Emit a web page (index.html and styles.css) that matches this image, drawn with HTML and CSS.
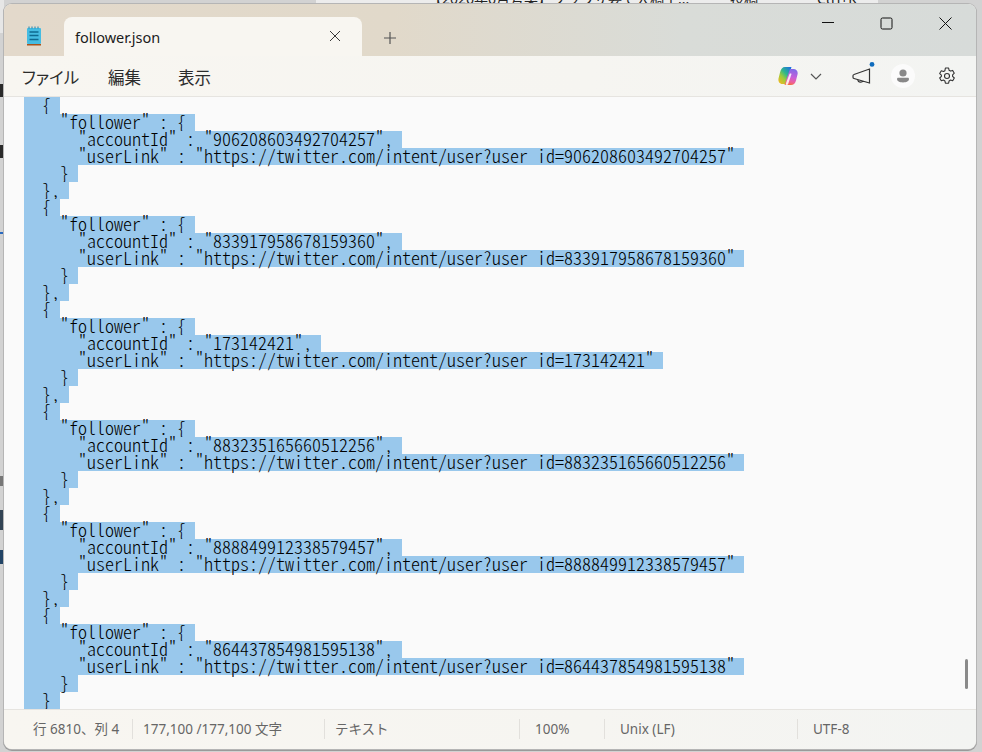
FILE: index.html
```html
<!DOCTYPE html>
<html lang="ja">
<head>
<meta charset="utf-8">
<title>follower.json</title>
<link rel="stylesheet" href="styles.css">
</head>
<body>
<div class="behind">
  <div class="behind-top"><span class="behind-title">【2026年6月号案】ブラウザ要で入稿工...</span><span class="behind-post">投稿</span><span class="behind-key">Ctrl+K</span></div>
  <i class="mark m0"></i><i class="mark m1"></i><i class="mark m2"></i><i class="mark m3"></i><i class="mark m4"></i><i class="mark m5"></i><i class="mark m6"></i>
</div>
<main class="window">
  <header class="tabbar">
    <div class="app-icon">
      <svg width="16" height="20" viewBox="0 0 16 20"><rect x="1" y="2" width="14" height="16" rx="1" fill="#45bce2"/><path d="M3 .5v2M6 .5v2M9 .5v2M12 .5v2" stroke="#1a7fa8" stroke-width="1"/><path d="M3.500 6h9M3.500 9.500h9M3.500 13.500h9" stroke="#0e6a90" stroke-width="1.500"/><rect x="1" y="18" width="14" height="1.500" fill="#a8531c"/></svg>
    </div>
    <div class="tab">
      <span class="tab-name">follower.json</span>
      <svg class="tab-close" width="12" height="12" viewBox="0 0 12 12"><path d="M1 1l10 10M11 1L1 11" stroke="#3a3a3a" stroke-width="1"/></svg>
    </div>
    <svg class="tab-new" width="12" height="12" viewBox="0 0 12 12"><path d="M6 0v12M0 6h12" stroke="#555" stroke-width="1.200"/></svg>
    <div class="caption">
      <svg width="13" height="13" viewBox="0 0 13 13"><path d="M1 5.500h12" stroke="#111" stroke-width="1"/></svg>
      <svg width="13" height="13" viewBox="0 0 13 13"><rect x="1" y="1" width="11" height="11" rx="1.500" fill="none" stroke="#111" stroke-width="1"/></svg>
      <svg width="13" height="13" viewBox="0 0 13 13"><path d="M.5.500l12 12M12.500.500l-12 12" stroke="#111" stroke-width="1"/></svg>
    </div>
  </header>
  <nav class="menubar">
    <span class="menu-item m-file">ファイル</span>
    <span class="menu-item m-edit">編集</span>
    <span class="menu-item">表示</span>
    <div class="tools">
      <svg class="copilot" width="20" height="20" viewBox="0 0 20 20">
        <defs>
          <linearGradient id="cpA" x1="0.1" y1="1" x2="0.9" y2="0"><stop offset="0" stop-color="#f5b81f"/><stop offset=".35" stop-color="#9ccb3c"/><stop offset=".6" stop-color="#2fb88a"/><stop offset="1" stop-color="#1b6fe4"/></linearGradient>
          <linearGradient id="cpB" x1="0.6" y1="0" x2="0.4" y2="1"><stop offset="0" stop-color="#7f6be8"/><stop offset=".5" stop-color="#c85fd8"/><stop offset=".8" stop-color="#ee5f9c"/><stop offset="1" stop-color="#f2703c"/></linearGradient>
        </defs>
        <path d="M7 1h6.500L8 18H4.500C1.500 18 0 15.500.5 12.500L2 6.500C2.800 3 4.500 1 7 1z" fill="url(#cpA)"/>
        <path d="M13 19H6.500L12 3h3.500c3 0 4.800 2.500 4 5.500L18 14.500c-.8 3-2.500 4.500-5 4.500z" fill="url(#cpB)"/>
        <path d="M7.500 18.500l4-10.500c.3-.6 1.800-.6 2 0l-3.500 10.500c-.3.500-2.200.500-2.500 0z" fill="#fff" opacity=".85"/>
      </svg>
      <svg class="chev" width="12" height="7" viewBox="0 0 12 7"><path d="M1 1l5 5 5-5" fill="none" stroke="#555" stroke-width="1.200"/></svg>
      <svg class="horn" width="23" height="28" viewBox="0 0 23 28"><path d="M17.500 7v14L2 16.500c-.7-.2-1-.6-1-1.200v-1.600c0-.6.300-1 1-1.200zM5.500 17.500c.5 3 4.500 3.500 5.500 1.300" fill="none" stroke="#333" stroke-width="1.200"/><circle cx="20" cy="2.400" r="2.400" fill="#0f6cbd"/></svg>
      <div class="avatar"><svg width="12" height="14" viewBox="0 0 14 16"><circle cx="7" cy="4.500" r="4.200" fill="#888"/><path d="M0 11.500c0-1 .8-1.500 1.500-1.500h11c.8 0 1.500.5 1.500 1.500 0 2.500-3 4-7 4s-7-1.500-7-4z" fill="#888"/></svg></div>
      <svg class="gear" width="18" height="18" viewBox="0 0 18 18"><path d="M7.400 1h3.200l.5 2.300 1.400.8 2.200-.7 1.600 2.800-1.700 1.600v1.600l1.700 1.600-1.600 2.800-2.200-.7-1.400.8-.5 2.300H7.400l-.5-2.300-1.400-.8-2.200.7-1.600-2.800 1.700-1.600V8.200L1.700 6.600l1.600-2.800 2.200.7 1.400-.8z" fill="none" stroke="#333" stroke-width="1.100" stroke-linejoin="round"/><circle cx="9" cy="9" r="2.500" fill="none" stroke="#333" stroke-width="1.100"/></svg>
    </div>
  </nav>
  <section class="editor">
<div class="line"><span class="sel">  { </span></div>
<div class="line"><span class="sel">    "follower" : { </span></div>
<div class="line"><span class="sel">      "accountId" : "906208603492704257", </span></div>
<div class="line"><span class="sel">      "userLink" : "https://twitter.com/intent/user?user<span class="clip">_</span>id=906208603492704257" </span></div>
<div class="line"><span class="sel">    } </span></div>
<div class="line"><span class="sel">  }, </span></div>
<div class="line"><span class="sel">  { </span></div>
<div class="line"><span class="sel">    "follower" : { </span></div>
<div class="line"><span class="sel">      "accountId" : "833917958678159360", </span></div>
<div class="line"><span class="sel">      "userLink" : "https://twitter.com/intent/user?user<span class="clip">_</span>id=833917958678159360" </span></div>
<div class="line"><span class="sel">    } </span></div>
<div class="line"><span class="sel">  }, </span></div>
<div class="line"><span class="sel">  { </span></div>
<div class="line"><span class="sel">    "follower" : { </span></div>
<div class="line"><span class="sel">      "accountId" : "173142421", </span></div>
<div class="line"><span class="sel">      "userLink" : "https://twitter.com/intent/user?user<span class="clip">_</span>id=173142421" </span></div>
<div class="line"><span class="sel">    } </span></div>
<div class="line"><span class="sel">  }, </span></div>
<div class="line"><span class="sel">  { </span></div>
<div class="line"><span class="sel">    "follower" : { </span></div>
<div class="line"><span class="sel">      "accountId" : "883235165660512256", </span></div>
<div class="line"><span class="sel">      "userLink" : "https://twitter.com/intent/user?user<span class="clip">_</span>id=883235165660512256" </span></div>
<div class="line"><span class="sel">    } </span></div>
<div class="line"><span class="sel">  }, </span></div>
<div class="line"><span class="sel">  { </span></div>
<div class="line"><span class="sel">    "follower" : { </span></div>
<div class="line"><span class="sel">      "accountId" : "888849912338579457", </span></div>
<div class="line"><span class="sel">      "userLink" : "https://twitter.com/intent/user?user<span class="clip">_</span>id=888849912338579457" </span></div>
<div class="line"><span class="sel">    } </span></div>
<div class="line"><span class="sel">  }, </span></div>
<div class="line"><span class="sel">  { </span></div>
<div class="line"><span class="sel">    "follower" : { </span></div>
<div class="line"><span class="sel">      "accountId" : "864437854981595138", </span></div>
<div class="line"><span class="sel">      "userLink" : "https://twitter.com/intent/user?user<span class="clip">_</span>id=864437854981595138" </span></div>
<div class="line"><span class="sel">    } </span></div>
<div class="line"><span class="sel">  } </span></div>
    <div class="scrollthumb"></div>
  </section>
  <footer class="statusbar">
    <span class="cell c-pos">行 6810、列 4</span>
    <span class="cell c-count">177,100 /177,100 文字</span>
    <span class="cell c-type">テキスト</span>
    <span class="cell c-zoom">100%</span>
    <span class="cell c-eol">Unix (LF)</span>
    <span class="cell c-enc">UTF-8</span>
  </footer>
</main>
</body>
</html>
```
FILE: styles.css
```css
* { box-sizing: border-box; }
html, body { margin: 0; height: 100%; }
body {
  width: 982px;
  height: 752px;
  overflow: hidden;
  position: relative;
  background: #d2d2d2;
  font-family: "Noto Sans", "Noto Sans CJK JP", sans-serif;
}
.behind { position: absolute; inset: 0; }
.behind-top {
  position: absolute;
  left: 316px; top: 0;
  width: 562px; height: 6px;
  background: #ececec;
  overflow: hidden;
  color: #222;
  font-size: 14px;
  line-height: 6px;
  white-space: nowrap;
}
.behind-title { position: absolute; left: 112px; top: -4px; }
.behind-post { position: absolute; left: 414px; top: -4px; }
.behind-key { position: absolute; left: 501px; top: -4px; }
.mark { position: absolute; left: 0; width: 4px; background: #2a2a2a; }
.m0 { top: 0; height: 33px; background: #e6e6e6; }
.m1 { top: 84px; height: 13px; }
.m2 { top: 145px; height: 13px; }
.m3 { top: 232px; height: 2px; background: #2a6ac0; }
.m4 { top: 476px; height: 10px; background: #777; }
.m5 { top: 510px; height: 20px; background: #345; }
.m6 { top: 550px; height: 14px; background: #246; }
.window {
  position: absolute;
  left: 4px; top: 4px;
  width: 972px; height: 745px;
  border-radius: 8px;
  overflow: hidden;
  display: flex;
  flex-direction: column;
  background: #f8f6f1;
  box-shadow: 0 0 0 1px #b5b5b5, 0 1px 0 1px #9a9a9a;
}
.tabbar {
  height: 52px;
  flex: none;
  display: flex;
  align-items: flex-end;
  background: linear-gradient(90deg, #e3d9cb 0%, #e1d9ca 40%, #d9dcd8 70%, #d7dbd9 100%);
}
.app-icon { width: 60px; height: 52px; display: flex; align-items: center; justify-content: center; padding: 12px 0 0 0; flex: none; }
.tab {
  width: 298px; height: 39px;
  background: #f8f6f1;
  border-radius: 8px 8px 0 0;
  display: flex;
  align-items: center;
  justify-content: space-between;
  padding: 0 21px 2px 11px;
  flex: none;
}
.tab-name { font-size: 14.500px; padding-top: 2px; color: #1c1c1c; }
.tab-new { margin: 0 0 12px 22px; flex: none; }
.caption { margin: 0 0 0 auto; align-self: flex-start; display: flex; gap: 46px; padding: 13px 24px 0 0; }
.menubar {
  height: 41px;
  flex: none;
  display: flex;
  align-items: center;
  padding: 0 0 0 18px;
  border-bottom: 1px solid #e6e4e0;
  background: linear-gradient(90deg, #f8f6f1 0%, #f6f5f1 60%, #f3f4f2 100%);
}
.menu-item { font-family: "Noto Sans CJK JP", sans-serif; font-size: 16.500px; padding-top: 2px; font-feature-settings: "palt"; color: #2b2b2b; }
.m-file { width: 86px; flex: none; }
.m-edit { width: 70px; flex: none; }
.tools { margin-left: auto; display: flex; align-items: center; }
.copilot { margin-right: 12px; }
.chev { margin-right: 30px; }
.horn { margin-right: 16px; }
.avatar { width: 24px; height: 24px; border-radius: 50%; background: #fbfbfb; display: flex; align-items: center; justify-content: center; margin-right: 23px; }
.gear { margin-right: 20px; }
.editor {
  flex: 1;
  min-height: 0;
  position: relative;
  overflow: hidden;
  background: #fafafa;
  padding: 0 0 0 20px;
  font-family: "Noto Sans CJK JP", monospace;
  font-feature-settings: "hwid";
  font-weight: 300;
  font-size: 18px;
  color: #000;
}
.line { height: 17px; white-space: pre; }
.sel { display: inline-block; height: 17px; line-height: 15px; background: #99c8ec; vertical-align: top; }
.clip { color: transparent; }
.scrollthumb { position: absolute; right: 8px; top: 562px; width: 3px; height: 30px; border-radius: 2px; background: #8a8a8a; }
.statusbar {
  height: 40px;
  flex: none;
  display: flex;
  align-items: center;
  padding-bottom: 2px;
  border-top: 1px solid #e6e4e0;
  background: linear-gradient(90deg, #f8f6f1 0%, #f6f5f1 60%, #f3f4f2 100%);
  font-size: 13.500px;
  color: #666;
}
.cell { height: 20px; line-height: 20px; padding-left: 10px; border-left: 1px solid #e2e0dc; flex: none; white-space: nowrap; }
.c-pos { width: 128px; padding-left: 29px; border-left: 0; }
.c-count { width: 192px; }
.c-type { width: 195px; }
.c-zoom { width: 85px; padding-left: 15px; }
.c-eol { width: 193px; padding-left: 15px; }
.c-enc { padding-left: 15px; }
```
